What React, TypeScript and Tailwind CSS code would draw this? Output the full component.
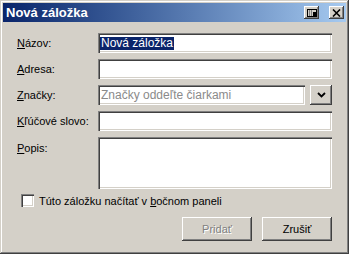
import type { ReactNode } from "react";

const raised =
  "bg-[#d4d0c8] shadow-[inset_-1px_-1px_0_#404040,inset_1px_1px_0_#ffffff,inset_-2px_-2px_0_#808080,inset_2px_2px_0_#d4d0c8]";
const sunken =
  "bg-white shadow-[inset_1px_1px_0_#808080,inset_2px_2px_0_#404040,inset_-1px_-1px_0_#ffffff,inset_-2px_-2px_0_#d4d0c8]";

function Field({
  label,
  children,
  top,
}: {
  label: ReactNode;
  children: ReactNode;
  top?: boolean;
}) {
  return (
    <div className={`flex ${top ? "items-start" : "items-center"}`}>
      <label className={`w-[81px] shrink-0 ${top ? "pt-[4px]" : ""}`}>{label}</label>
      {children}
    </div>
  );
}

function TitleButton({ children }: { children: ReactNode }) {
  return (
    <div className={`flex h-[13px] w-[15px] items-center justify-center ${raised}`}>
      {children}
    </div>
  );
}

export default function App() {
  return (
    <div
      className="flex h-[254px] w-[349px] flex-col bg-[#d4d0c8] p-[3px] text-[11px] leading-[14px] text-black shadow-[inset_-1px_-1px_0_#404040,inset_1px_1px_0_#d4d0c8,inset_-2px_-2px_0_#808080,inset_2px_2px_0_#ffffff]"
      style={{ fontFamily: '"Liberation Sans", Arial, sans-serif' }}
    >
      {/* title bar */}
      <div className="flex h-[19px] shrink-0 items-center justify-between bg-gradient-to-r from-[#0a246a] to-[#a6caf0] pl-[3px] pr-[2px]">
        <span className="text-[13px] font-bold text-white">Nová záložka</span>
        <div className="flex items-center gap-[10px]">
          <TitleButton>
            <svg width="10" height="8" viewBox="0 0 10 8">
              <rect x="0.5" y="0.5" width="9" height="7" fill="none" stroke="#000" />
              <rect x="2" y="1" width="1" height="6" fill="#808080" />
              <rect x="4" y="1" width="1" height="6" fill="#808080" />
              <rect x="6" y="3" width="3" height="4" fill="#000" />
            </svg>
          </TitleButton>
          <TitleButton>
            <svg width="9" height="8" viewBox="0 0 9 8">
              <path d="M1 0.5 L8 7.5 M8 0.5 L1 7.5" stroke="#000" strokeWidth="1.6" />
            </svg>
          </TitleButton>
        </div>
      </div>

      {/* body */}
      <div className="flex flex-1 flex-col pl-[14px] pr-[14px] pt-[11px]">
        <div className="flex flex-col gap-[6px]">
          <Field label={<><u>N</u>ázov:</>}>
            <div className={`flex h-[20px] flex-1 items-center px-[2px] ${sunken}`}>
              <span className="bg-[#0a246a] px-[1px] text-[12px] leading-[13px] text-white">Nová záložka</span>
            </div>
          </Field>
          <Field label={<><u>A</u>dresa:</>}>
            <div className={`h-[20px] flex-1 ${sunken}`} />
          </Field>
          <Field label={<><u>Z</u>načky:</>}>
            <div className="flex flex-1 items-center gap-[5px]">
              <div className={`flex h-[20px] flex-1 items-center px-[3px] text-[12px] text-[#8a8a8a] ${sunken}`}>
                Značky oddeľte čiarkami
              </div>
              <div className={`flex h-[20px] w-[22px] items-center justify-center ${raised}`}>
                <svg width="9" height="6" viewBox="0 0 9 6">
                  <path d="M1 1 L4.5 4.5 L8 1" fill="none" stroke="#000" strokeWidth="1.8" />
                </svg>
              </div>
            </div>
          </Field>
          <Field label={<><u>K</u>ľúčové slovo:</>}>
            <div className={`h-[20px] flex-1 ${sunken}`} />
          </Field>
          <Field top label={<><u>P</u>opis:</>}>
            <div className={`h-[52px] flex-1 ${sunken}`} />
          </Field>
        </div>

        <div className="mt-[5px] flex h-[13px] items-center gap-[5px] pl-[4px]">
          <div className={`h-[13px] w-[13px] ${sunken}`} />
          <span>
            Túto záložku načítať v <u>b</u>očnom paneli
          </span>
        </div>

        <div className="mt-[10px] flex justify-end gap-[10px]">
          <div className={`flex h-[24px] w-[70px] items-center justify-center text-[#808080] [text-shadow:1px_1px_0_#ffffff] ${raised}`}>
            Pridať
          </div>
          <div className={`flex h-[24px] w-[70px] items-center justify-center ${raised}`}>
            Zrušiť
          </div>
        </div>
      </div>
    </div>
  );
}
